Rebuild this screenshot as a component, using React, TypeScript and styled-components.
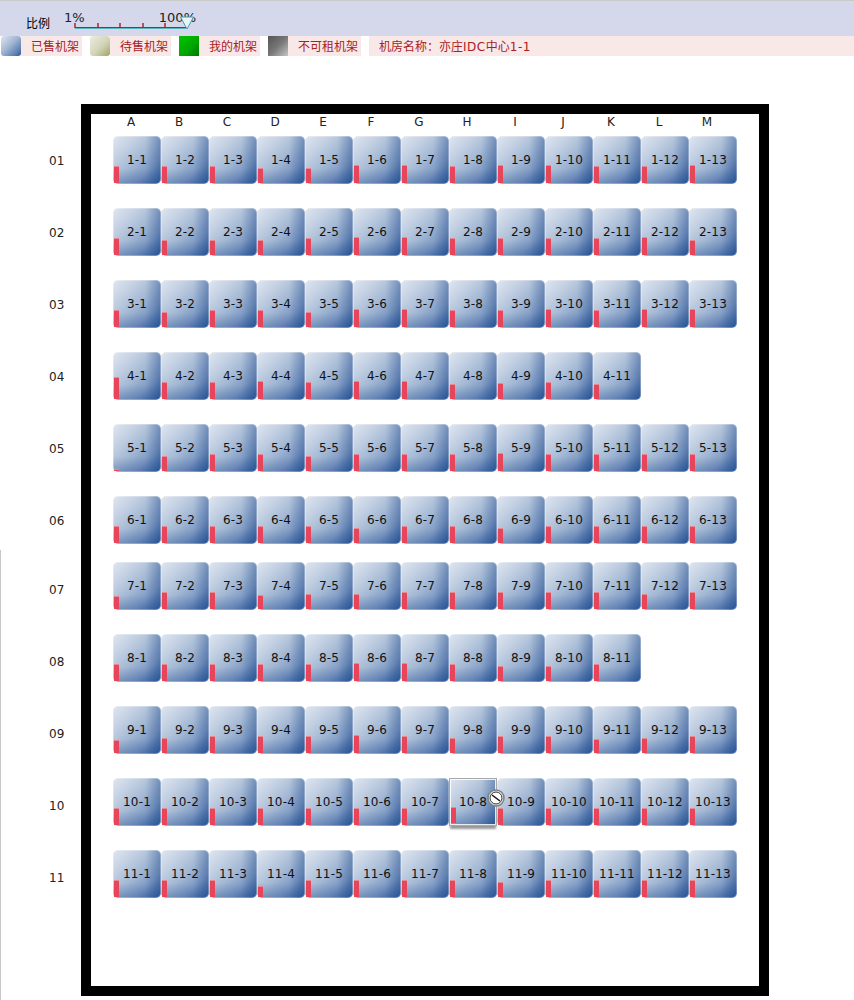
import React from 'react';
import styled, { createGlobalStyle } from 'styled-components';

const FONT = `"DejaVu Sans", "Noto Sans CJK SC", sans-serif`;

const GlobalStyle = createGlobalStyle`
  html, body {
    margin: 0;
    padding: 0;
  }
  body {
    height: 1000px;
    overflow: hidden;
    font-family: ${FONT};
    font-size: 12px;
    color: #111;
    background: linear-gradient(#c8c8c8, #c8c8c8) 0 550px / 1px 450px no-repeat #fff;
  }
`;

const TopBar = styled.div`
  display: flex;
  height: 35px;
  background: #d4d8ea;
  border-top: 1px solid #c9c9c9;
`;

const ScaleLabel = styled.div`
  width: 38px;
  padding: 15px 0 0 26px;
  line-height: 16px;
  font-size: 12px;
  color: #000;
`;

const Slider = styled.div`
  width: 140px;
  padding-top: 9px;
`;

const SliderMarks = styled.div`
  display: flex;
  justify-content: space-between;
  width: 132px;
  height: 13px;
  line-height: 15px;
  font-size: 13px;
  color: #222;
`;

const SliderRail = styled.div`
  display: flex;
  margin-left: 10px;
  height: 6px;
  position: relative;
`;

const Ticks = styled.div`
  display: flex;
  gap: 20.5px;
  height: 5px;
`;

const Tick = styled.span`
  width: 2px;
  height: 5px;
  background: #c0504f;
`;

const Track = styled.div`
  position: absolute;
  left: 1px;
  top: 3.5px;
  width: 111px;
  height: 2.5px;
  background: linear-gradient(#37535f 65%, #5fb4c0 65%);
`;

const Thumb = styled.svg`
  position: absolute;
  left: 106px;
  top: -7px;
`;

const LegendBar = styled.div`
  display: flex;
  height: 20px;
`;

const Swatch = styled.div<{ $bg: string }>`
  width: 20px;
  height: 20px;
  margin-left: ${(p) => (p.$bg === 'sold' ? '1px' : '0')};
  border-radius: ${(p) => (p.$bg === 'sold' || p.$bg === 'pending' ? '3px' : '0')};
  background: ${(p) =>
    ({
      sold: 'linear-gradient(135deg, #dfe6f0 0%, #a3b7d3 45%, #5f82b2 80%, #2a5595 100%)',
      pending: 'linear-gradient(135deg, #ecece0 0%, #d2d4b8 55%, #a0a566 100%)',
      mine: 'linear-gradient(135deg, #00c400 0%, #00a800 55%, #007a00 100%)',
      rented: 'linear-gradient(135deg, #555 0%, #777 50%, #c4c4c4 100%)',
    }[p.$bg])};
`;

const LegendText = styled.div<{ $grow?: boolean }>`
  flex: ${(p) => (p.$grow ? 1 : 'none')};
  margin-right: ${(p) => (p.$grow ? 0 : '8px')};
  padding: 0 3px 0 10px;
  line-height: 23px;
  font-size: 12px;
  color: #a8201f;
  background: #f9e8e8;
`;

const LatinRun = styled.span`
  letter-spacing: 0.5px;
`;

const Hall = styled.div`
  display: flex;
  padding-top: 48px;
`;

const RowLabels = styled.div`
  width: 81px;
  padding-top: 49px;
`;

const RowLabel = styled.div<{ $h: number }>`
  height: ${(p) => p.$h}px;
  padding-left: 49px;
  line-height: 16px;
  box-sizing: border-box;
  color: #222;
`;

const Frame = styled.div`
  width: 668px;
  height: 872px;
  border: 10px solid #000;
  background: #fff;
`;

const ColumnHead = styled.div`
  display: flex;
  height: 22px;
  padding-left: 16px;
`;

const ColumnName = styled.div`
  width: 48px;
  line-height: 16px;
  text-align: center;
  color: #222;
`;

const CabinetRow = styled.div<{ $gap: number }>`
  display: flex;
  height: 48px;
  margin-bottom: ${(p) => p.$gap}px;
  padding-left: 22px;
`;

const Cabinet = styled.div<{ $hover?: boolean }>`
  position: relative;
  box-sizing: border-box;
  width: 48px;
  height: 48px;
  padding-bottom: 1px;
  display: flex;
  align-items: center;
  justify-content: center;
  border-radius: ${(p) => (p.$hover ? '0' : '5px')};
  border: 1px solid ${(p) => (p.$hover ? '#a8a8a8' : 'rgba(255, 255, 255, 0.3)')};
  outline: ${(p) => (p.$hover ? '1px solid rgba(255, 255, 255, 0.85)' : 'none')};
  outline-offset: -2px;
  box-shadow: ${(p) => (p.$hover ? '0 4px 2px -1px #999' : 'none')};
  background-origin: border-box;
  background-image: linear-gradient(to right, transparent 68%, rgba(38, 79, 144, 0.4) 100%),
    linear-gradient(to bottom, transparent 68%, rgba(38, 79, 144, 0.32) 100%),
    linear-gradient(135deg, #dfe6f0 0%, #c4d1e3 25%, #a3b8d4 50%, #7f9ac3 72%, #4f76ad 88%, #2a5595 100%);
  font-size: 12px;
  letter-spacing: 0.2px;
  color: #111;
`;

const UsageBar = styled.div<{ $hover?: boolean }>`
  position: absolute;
  left: ${(p) => (p.$hover ? '1px' : '0')};
  bottom: ${(p) => (p.$hover ? '2px' : '0')};
  width: 5px;
  background: #e8455a;
  border-top: 1px solid #e58a96;
  box-sizing: border-box;
`;

const NoDropCursor = styled.svg`
  position: absolute;
  right: -9px;
  top: 10px;
  z-index: 2;
`;

const COLUMNS = 'ABCDEFGHIJKLM'.split('');

const USAGE: number[][] = [
  [17, 17, 17, 15, 15, 18, 18, 17, 18, 18, 17, 17, 18],
  [17, 15, 15, 15, 17, 18, 18, 17, 17, 17, 17, 18, 15],
  [17, 15, 17, 17, 15, 18, 18, 17, 17, 18, 17, 18, 18],
  [22, 17, 17, 18, 17, 18, 18, 15, 16, 17, 15],
  [2, 15, 17, 17, 15, 17, 17, 17, 18, 17, 17, 17, 17],
  [17, 17, 17, 17, 17, 15, 17, 17, 15, 17, 17, 17, 17],
  [13, 17, 17, 14, 15, 15, 17, 17, 17, 17, 17, 15, 17],
  [17, 17, 17, 17, 17, 18, 18, 17, 15, 15, 17],
  [13, 15, 17, 17, 17, 18, 17, 15, 17, 17, 14, 15, 17],
  [17, 17, 17, 17, 17, 17, 17, 16, 17, 17, 17, 17, 17],
  [17, 17, 17, 11, 17, 17, 17, 17, 15, 17, 17, 17, 17],
];

const rowGap = (i: number) => (i === 5 ? 18 : 24);

export default function App() {
  return (
    <>
      <GlobalStyle />
      <TopBar>
        <ScaleLabel>比例</ScaleLabel>
        <Slider>
          <SliderMarks>
            <span>1%</span>
            <span>100%</span>
          </SliderMarks>
          <SliderRail>
            <Ticks>
              {[0, 1, 2, 3, 4].map((t) => (
                <Tick key={t} />
              ))}
            </Ticks>
            <Track />
            <Thumb width="14" height="14" viewBox="0 0 14 14">
              <path d="M0.5 1 L13.5 1 L7 13 Z" fill="#e6f6f8" stroke="#4f9aa8" strokeWidth="1" />
            </Thumb>
          </SliderRail>
        </Slider>
      </TopBar>
      <LegendBar>
        <Swatch $bg="sold" />
        <LegendText>已售机架</LegendText>
        <Swatch $bg="pending" />
        <LegendText>待售机架</LegendText>
        <Swatch $bg="mine" />
        <LegendText>我的机架</LegendText>
        <Swatch $bg="rented" />
        <LegendText>不可租机架</LegendText>
        <LegendText $grow>
          机房名称：亦庄<LatinRun>IDC</LatinRun>中心<LatinRun>1-1</LatinRun>
        </LegendText>
      </LegendBar>
      <Hall>
        <RowLabels>
          {USAGE.map((_, i) => (
            <RowLabel key={i} $h={i === 5 ? 69 : 72}>
              {String(i + 1).padStart(2, '0')}
            </RowLabel>
          ))}
        </RowLabels>
        <Frame>
          <ColumnHead>
            {COLUMNS.map((c) => (
              <ColumnName key={c}>{c}</ColumnName>
            ))}
          </ColumnHead>
          {USAGE.map((row, r) => (
            <CabinetRow key={r} $gap={rowGap(r)}>
              {row.map((h, c) => {
                const hover = r === 9 && c === 7;
                return (
                  <Cabinet key={c} $hover={hover}>
                    {`${r + 1}-${c + 1}`}
                    <UsageBar $hover={hover} style={{ height: h }} />
                    {hover && (
                      <NoDropCursor width="18" height="18" viewBox="0 0 18 18">
                        <circle cx="9" cy="9" r="8" fill="#eef0f2" stroke="#7b8288" strokeWidth="1.5" />
                        <circle cx="9" cy="9" r="6" fill="#fff" stroke="#333" strokeWidth="1" />
                        <path d="M5 6 L13 12" stroke="#111" strokeWidth="1.5" />
                      </NoDropCursor>
                    )}
                  </Cabinet>
                );
              })}
            </CabinetRow>
          ))}
        </Frame>
      </Hall>
    </>
  );
}
